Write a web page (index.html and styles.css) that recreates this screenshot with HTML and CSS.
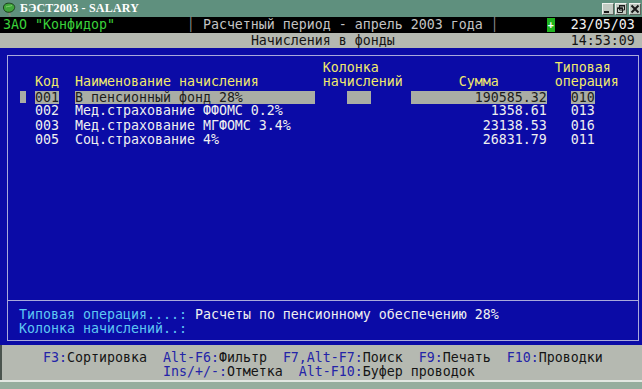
FILE: index.html
```html
<!DOCTYPE html>
<html lang="ru">
<head>
  <meta charset="UTF-8">
  <title>БЭСТ2003 - SALARY</title>
  <link rel="stylesheet" href="styles.css">
</head>
<body>
  <div class="window">
    <header class="titlebar">
      <svg class="app-icon" width="14" height="14" viewBox="0 0 14 14">
        <path d="M6 10 L7 14 L9 14 L8 10 Z" fill="#8a8a80"/>
        <path d="M1.5 6 C1 3 4 0.8 7.5 1.2 C11 1.5 13.5 3.5 12.5 6.5 C11.8 9 8.5 10.8 5.5 10.2 C3 9.8 1.8 8 1.5 6 Z" fill="#3fa53a" stroke="#1d3f1c" stroke-width="1"/>
        <path d="M4 5 C6 4 8 4.5 10 3.5" stroke="#7fd06f" stroke-width="1" fill="none"/>
      </svg>
      <span class="title">БЭСТ2003 - SALARY</span>
      <div class="win-buttons">
        <span class="wbtn">
          <svg width="10" height="10" viewBox="0 0 10 10"><rect x="1" y="7" width="5" height="2" fill="#1a1a1a"/></svg>
        </span>
        <span class="wbtn">
          <svg width="10" height="10" viewBox="0 0 10 10"><path d="M3.5 1.5h5v4.5h-5z M1.5 4h5v4.5h-5z" fill="none" stroke="#1a1a1a" stroke-width="1"/><rect x="3" y="1" width="6" height="1.5" fill="#1a1a1a"/><rect x="1" y="3.5" width="6" height="1.5" fill="#1a1a1a"/></svg>
        </span>
        <span class="wbtn close">
          <svg width="10" height="10" viewBox="0 0 10 10"><path d="M1.5 1.5 L8.5 8.5 M8.5 1.5 L1.5 8.5" stroke="#1a1a1a" stroke-width="2"/></svg>
        </span>
      </div>
    </header>

    <div class="screen">
      <div class="status">
        <span class="firm">ЗАО "Конфидор"</span>
        <span class="sep">│</span>
        <span class="period">Расчетный период - апрель 2003 года</span>
        <span class="sep">│</span>
        <span class="plus-cell"><span class="plus">+</span></span>
        <span class="date">23/05/03</span>
      </div>

      <div class="caption">
        <span class="caption-title">Начисления в фонды</span>
        <span class="clock">14:53:09</span>
      </div>

      <main class="workspace">
        <div class="frame">
          <div class="table">
            <span></span><span></span><span></span>
            <span class="head">Колонка</span><span></span>
            <span class="head">Типовая</span>

            <span></span>
            <span class="head">Код</span>
            <span class="head">Наименование начисления</span>
            <span class="head">начислений</span>
            <span class="head sum-head">Сумма</span>
            <span class="head">операция</span>

            <span><span class="marker"></span></span>
            <span><span class="hl code">001</span></span>
            <span><span class="hl name">В пенсионный фонд 28%</span></span>
            <span><span class="hl box"></span></span>
            <span><span class="hl sum">190585.32</span></span>
            <span><span class="hl op">010</span></span>

            <span></span>
            <span>002</span>
            <span>Мед.страхование ФФОМС 0.2%</span>
            <span></span>
            <span class="sum">1358.61</span>
            <span class="op">013</span>

            <span></span>
            <span>003</span>
            <span>Мед.страхование МГФОМС 3.4%</span>
            <span></span>
            <span class="sum">23138.53</span>
            <span class="op">016</span>

            <span></span>
            <span>005</span>
            <span>Соц.страхование 4%</span>
            <span></span>
            <span class="sum">26831.79</span>
            <span class="op">011</span>
          </div>

          <div class="info">
            <div class="info-row"><span class="info-label">Типовая операция....:</span> Расчеты по пенсионному обеспечению 28%</div>
            <div class="info-row"><span class="info-label">Колонка начислений..:</span></div>
          </div>
        </div>
      </main>

      <footer class="keys">
        <div class="keys-row first"><span class="key">F3:</span>Сортировка  <span class="key">Alt-F6:</span>Фильтр  <span class="key">F7,Alt-F7:</span>Поиск  <span class="key">F9:</span>Печать  <span class="key">F10:</span>Проводки</div>
        <div class="keys-row second"><span class="key">Ins/+/-:</span>Отметка  <span class="key">Alt-F10:</span>Буфер проводок</div>
      </footer>
    </div>

    <div class="frame-bottom"></div>
  </div>
</body>
</html>
```

FILE: styles.css
```css
:root {
  --title-color: #5f907e;
  --panel-gray: #b5b9b1;
  --dos-blue: #0b0ba6;
  --frame-line: #a9a9dc;
  --head-yellow: #f2ea6c;
  --row-white: #f0f0f0;
  --hl-gray: #a9ada5;
  --info-cyan: #5ec8f4;
  --key-blue: #2424a8;
}
html, body {
  margin: 0;
  padding: 0;
}
body {
  width: 642px;
  height: 389px;
  overflow: hidden;
  background: #96ae9e;
}
.window {
  width: 642px;
  height: 389px;
  display: flex;
  flex-direction: column;
}

/* window title */
.titlebar {
  height: 17px;
  background: var(--title-color);
  display: flex;
  align-items: center;
  padding-left: 2px;
  flex-shrink: 0;
}
.app-icon {
  flex-shrink: 0;
}
.title {
  margin-left: 4px;
  font-family: "Liberation Serif", serif;
  font-weight: bold;
  font-size: 12px;
  color: #ffffff;
  letter-spacing: 0.2px;
}
.win-buttons {
  margin-left: auto;
  display: flex;
  gap: 1px;
  padding-right: 1px;
}
.wbtn {
  width: 12px;
  height: 12px;
  background: #c3cbc3;
  border-top: 1px solid #eef2ee;
  border-left: 1px solid #eef2ee;
  border-right: 1px solid #5a625a;
  border-bottom: 1px solid #5a625a;
  display: flex;
  align-items: center;
  justify-content: center;
  box-sizing: border-box;
}
.wbtn.close {
  margin-left: 1px;
}

/* text mode screen */
.screen {
  font-family: "DejaVu Sans Mono", monospace;
  font-size: 13.29px;
  display: flex;
  flex-direction: column;
  flex-shrink: 0;
}
.status {
  height: 16px;
  line-height: 16px;
  background: #000000;
  padding-left: 3px;
  display: grid;
  grid-template-columns: 23ch 2ch 36ch 7ch 3ch 8ch;
  white-space: pre;
}
.firm {
  color: #3bd23b;
}
.sep {
  color: #8a8a8a;
}
.period {
  color: #c4c4c4;
}
.plus-cell {
  display: flex;
  align-items: center;
}
.plus {
  display: inline-block;
  width: 8px;
  height: 14px;
  line-height: 14px;
  background: #1fb41f;
  color: #ffffff;
  text-align: center;
  font-size: 10px;
  font-weight: bold;
}
.date {
  color: #f2f2f2;
}

.caption {
  height: 15px;
  line-height: 15px;
  background: var(--panel-gray);
  color: #141414;
  padding-left: 3px;
  display: grid;
  grid-template-columns: 31ch 40ch 8ch;
  white-space: pre;
}
.caption-title {
  grid-column: 1 / 3;
  padding-left: 31ch;
}
.caption .clock {
  grid-column: 3;
}

/* blue work area */
.workspace {
  height: 297px;
  box-sizing: border-box;
  background: var(--dos-blue);
  padding: 7px 3px 4px 7px;
  display: flex;
  flex-direction: column;
}
.frame {
  flex: 1;
  border: 1px solid var(--frame-line);
  display: flex;
  flex-direction: column;
}
.table {
  padding: 4.5px 0 0 11px;
  display: grid;
  grid-template-columns: 2ch 5ch 31ch 11ch 18ch 10ch;
  grid-auto-rows: 14.5px;
  line-height: 14.5px;
  color: var(--row-white);
  white-space: pre;
}
.head {
  color: var(--head-yellow);
}
.sum-head {
  padding-left: 6ch;
}
.marker {
  display: inline-block;
  width: 6px;
  height: 12px;
  margin: 1.5px 0 0 1px;
  background: var(--hl-gray);
  vertical-align: top;
}
.hl {
  display: inline-block;
  background: var(--hl-gray);
  color: #1c1c1c;
  height: 13px;
  line-height: 13px;
  margin-top: 1.5px;
  vertical-align: top;
}
.hl.code {
  width: 3ch;
}
.hl.name {
  width: 30ch;
}
.hl.box {
  width: 3ch;
  margin-left: 3ch;
}
.sum {
  display: inline-block;
  width: 17ch;
  text-align: right;
}
.op {
  display: inline-block;
  margin-left: 2ch;
  width: 3ch;
}
.hl.op {
  margin-left: 2ch;
}

.info {
  margin-top: auto;
  border-top: 1px solid var(--frame-line);
  padding: 6.5px 0 3.5px 11px;
  color: var(--row-white);
}
.info-row {
  height: 14.5px;
  line-height: 14.5px;
  white-space: pre;
}
.info-label {
  color: var(--info-cyan);
}

/* key legend */
.keys {
  height: 35px;
  box-sizing: border-box;
  background: var(--panel-gray);
  border-left: 2px solid #4a544e;
  padding-top: 5.5px;
  color: #141414;
}
.keys-row {
  height: 14.5px;
  line-height: 14.5px;
  white-space: pre;
}
.keys-row.first {
  padding-left: calc(5ch + 1px);
}
.keys-row.second {
  padding-left: calc(20ch + 1px);
}
.key {
  color: var(--key-blue);
}

.frame-bottom {
  flex: 1;
  border-top: 2px solid #e2e8e2;
  background: #96ae9e;
}
```
